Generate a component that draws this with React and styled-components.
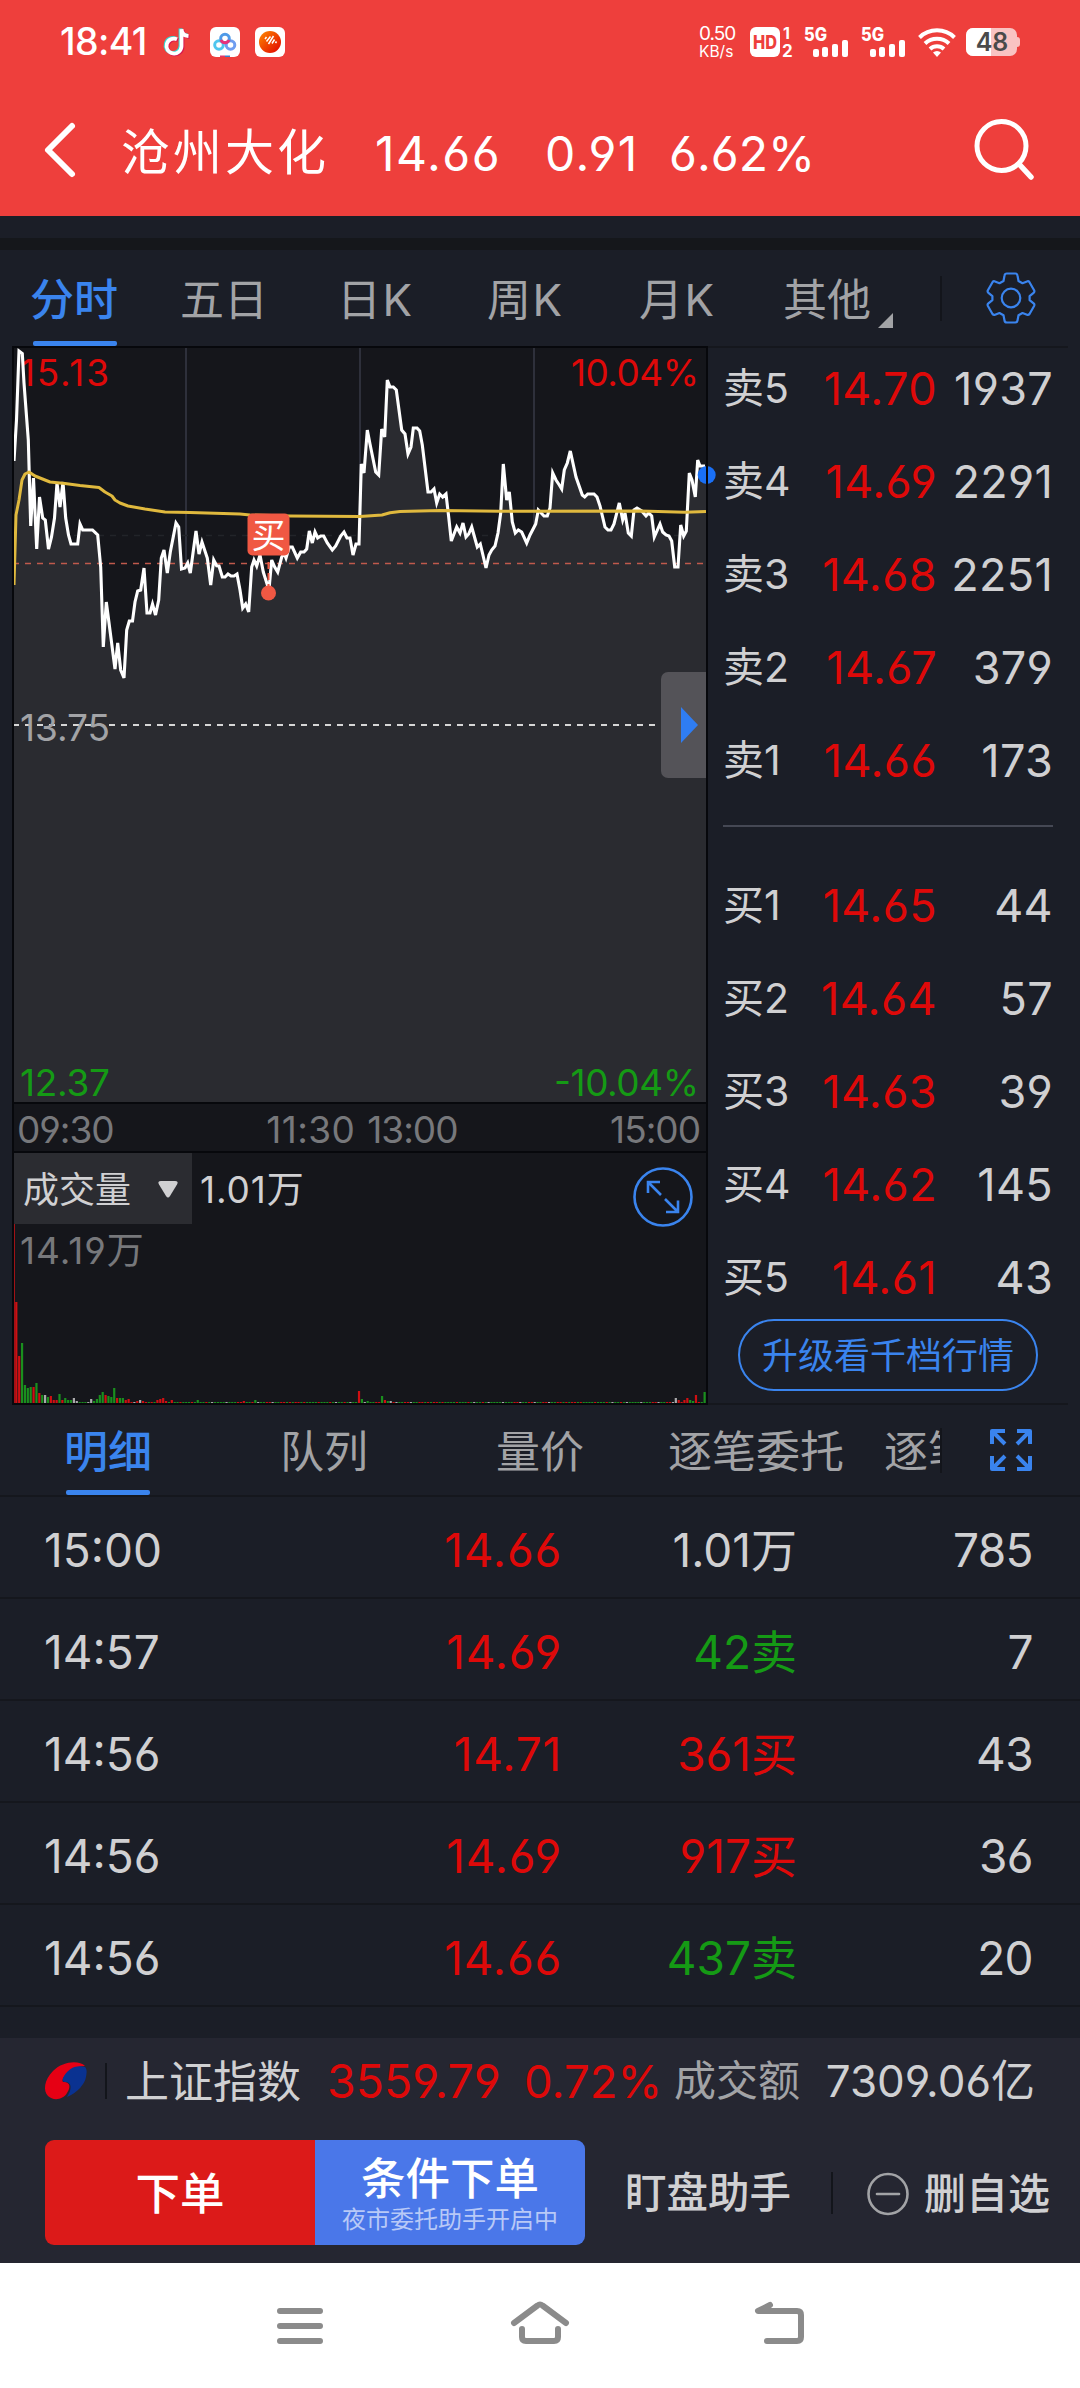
import React from "react";
import styled, { createGlobalStyle } from "styled-components";

const UP = "#de0909";
const DOWN = "#159a15";
const BLUE = "#3a84ee";
const LIGHT = "#d0d0d2";
const GREY = "#a2a3a6";

const priceLine = [
  [14, 461], [16.5, 420], [19, 351], [22.3, 353.5], [24, 383], [28.3, 440], [30.7, 526], [33.5, 478], [36.7, 549], [39.5, 497],
  [42.7, 518], [45.3, 520], [48.5, 549], [51.5, 537], [54.5, 518], [57, 483], [60, 507], [63, 482], [65.7, 518], [68.5, 535],
  [71, 544], [77.7, 544], [80, 524], [82.7, 530], [92.5, 530], [97.7, 535], [100.7, 567], [103.3, 647], [106.3, 602], [115, 669],
  [117.7, 643], [120.7, 670], [124, 678], [126.7, 630], [129.3, 621], [132.5, 621], [135, 602], [137.7, 591], [140.7, 590], [144, 568],
  [147, 613], [150, 613], [152.5, 604], [155.5, 615], [158.7, 600], [161.3, 558], [164, 550], [167.3, 573], [170.3, 552], [176, 523],
  [178.7, 527], [181.5, 569], [185, 568], [187.7, 563], [190.3, 573], [196, 531], [199, 554], [202, 542], [207.3, 558], [210.7, 585],
  [213.7, 560], [216.7, 565.7], [219, 566], [222.3, 577], [225, 577], [228, 574], [231, 576], [234, 576], [237, 574], [240, 590],
  [242.7, 608], [245.7, 604], [248.7, 612], [251.7, 567], [254, 560], [256.7, 566], [260, 555], [263.3, 572], [267.7, 586], [269.3, 586],
  [271.7, 560], [274.7, 567], [277.7, 572], [281.7, 557], [284, 553], [286, 558], [289.3, 547], [292.3, 547], [297.3, 558], [300.7, 552],
  [304, 552], [306.7, 549], [309.3, 531], [312.3, 543], [315, 532], [317.7, 538], [320.7, 536], [323.7, 536], [327.3, 543], [332.3, 550],
  [335.7, 546], [340.7, 536], [344, 532], [347, 538], [350, 538], [353, 555], [356, 544], [359, 544], [361.3, 464], [364, 473],
  [367.3, 430], [370, 444], [375.7, 472], [378.7, 475], [381.7, 429], [384.7, 437], [387.3, 380], [390, 387], [393.3, 387], [396.3, 390],
  [401.7, 430], [405, 434], [408, 454], [411, 447], [413.3, 428], [417, 428], [419.7, 431], [422.3, 445], [428, 492], [431, 492],
  [434, 489], [436.7, 503], [439.7, 494], [442.7, 497], [446, 494], [448.7, 517], [451.3, 541], [456.7, 527], [460, 533], [463, 523],
  [466, 537], [468.7, 534], [471.7, 527], [477.3, 547], [480.3, 544], [486, 568], [489, 555], [491.7, 550], [495, 546], [498, 533],
  [500.7, 513], [503.3, 464], [506.7, 500], [509.3, 492], [512.3, 522], [515.3, 533], [518.3, 530], [521.7, 532], [526.7, 543], [530, 535],
  [535.7, 524], [538.3, 510], [544, 516], [547.3, 516], [550, 508], [552.7, 473], [556, 480], [559.3, 485], [561.7, 489], [564.3, 470],
  [567.3, 463], [570.3, 451], [576, 477], [582.3, 495], [584.7, 497], [587.7, 494], [594, 494], [597, 497], [600, 506], [605, 527],
  [608, 530], [611, 530], [614, 524], [619.3, 503], [622.7, 520], [625, 513], [628.3, 533], [631.3, 536], [634, 510], [637, 508],
  [641.7, 511], [646, 516], [648.7, 513], [651.7, 516], [654.3, 537], [660, 524], [662.7, 532], [666, 535], [669, 536], [671.7, 541],
  [674.7, 567], [678, 567], [680.7, 525], [683.7, 536], [686.3, 531], [689.3, 473], [692, 480], [695.3, 497], [697.7, 460], [700, 466],
  [705, 466],
];

const averageLine = [
  [14, 585], [16, 515], [19, 500], [22, 480], [25, 474], [29, 472], [35, 476], [50, 482], [65, 483.5], [80, 485.5], [99, 487.5],
  [105, 492], [112, 496], [115, 500], [120, 503], [128, 506], [145, 509], [165, 512], [190, 512.5], [240, 514], [250, 515],
  [290, 516], [360, 516.5], [382, 515], [390, 512.8], [400, 511.5], [440, 510.5], [500, 511.3], [640, 511], [685, 512.3], [706, 511.5],
];

// index of the minute -> [height, colour]
const bigBars = {
  0: [101, "r"], 1: [47, "r"], 2: [60, "g"], 3: [18, "g"], 4: [15, "g"], 5: [16, "g"], 6: [16, "r"], 7: [20, "g"], 8: [10, "r"],
  9: [8, "g"], 10: [8, "w"], 11: [6, "g"], 12: [7, "r"], 13: [3, "r"], 14: [3, "r"], 15: [9, "g"], 16: [3, "r"], 17: [5, "g"],
  18: [3, "g"], 19: [3, "g"], 20: [5, "w"], 21: [2, "w"], 26: [4, "w"], 27: [2, "g"], 28: [4, "g"], 29: [8, "g"], 30: [11, "g"],
  31: [8, "r"], 32: [7, "g"], 33: [6, "g"], 34: [15, "g"], 35: [5, "r"], 36: [5, "g"], 37: [5, "g"], 38: [3, "r"], 39: [4, "r"],
  42: [2, "r"], 43: [3, "w"], 44: [2, "r"], 49: [3, "r"], 50: [4, "r"], 51: [5, "r"], 52: [2, "r"], 54: [3, "r"], 63: [3, "g"],
  79: [2, "r"], 83: [3, "g"], 119: [12, "r"], 120: [4, "g"], 122: [2, "g"], 127: [7, "g"], 128: [3, "r"], 129: [2, "g"], 130: [2, "w"],
  229: [5, "w"], 230: [3, "r"], 232: [3, "r"], 233: [5, "r"], 234: [3, "g"], 235: [2, "g"], 236: [8, "r"], 239: [11, "g"],
};
const barColors = { r: "#cf0f12", g: "#1a8f1e", w: "#a9a9ab" };
const smallPattern = "ggrgwggrrgrgggrrwg";

const asks = [
  ["卖5", "14.70", "1937"],
  ["卖4", "14.69", "2291"],
  ["卖3", "14.68", "2251"],
  ["卖2", "14.67", "379"],
  ["卖1", "14.66", "173"],
];
const bids = [
  ["买1", "14.65", "44"],
  ["买2", "14.64", "57"],
  ["买3", "14.63", "39"],
  ["买4", "14.62", "145"],
  ["买5", "14.61", "43"],
];
const trades = [
  ["15:00", "14.66", "1.01万", LIGHT, "785"],
  ["14:57", "14.69", "42卖", DOWN, "7"],
  ["14:56", "14.71", "361买", UP, "43"],
  ["14:56", "14.69", "917买", UP, "36"],
  ["14:56", "14.66", "437卖", DOWN, "20"],
];

const toPoints = (list) => list.map((p) => p.join(",")).join(" ");

const SignalBars = () => (
  <svg width="46" height="30" viewBox="0 0 46 30">
    <text x="0" y="14" fontSize="18.5" fontWeight="800" fill="#fff" textLength="23" lengthAdjust="spacingAndGlyphs">5G</text>
    <rect x="9" y="22" width="6" height="8" rx="2" fill="#fff" />
    <rect x="18" y="20" width="6" height="10" rx="2" fill="#fff" />
    <rect x="28" y="17" width="6" height="13" rx="2" fill="#fff" />
    <rect x="38" y="13" width="6" height="17" rx="2" fill="#fff" />
  </svg>
);

const PriceChart = () => (
  <ChartSvg width="698" height="758" viewBox="12 346 698 758">
    <rect x="13" y="347" width="694" height="756" fill="#15161b" />
    {[186, 360, 534].map((x) => (
      <line key={x} x1={x} x2={x} y1="348" y2="1102" stroke="#2e303b" strokeWidth="2" />
    ))}
    <line x1="14" x2="706" y1="535.5" y2="535.5" stroke="#222429" strokeWidth="1.5" strokeDasharray="6 6" />
    <polygon points={`14,1102 ${toPoints(priceLine)} 706,466 706,1102`} fill="#2a2b30" />
    <line x1="14" x2="706" y1="563.5" y2="563.5" stroke="#c05a4c" strokeWidth="1.6" strokeDasharray="6 6" strokeDashoffset="1" />
    <line x1="14" x2="706" y1="725" y2="725" stroke="#d6d6d6" strokeWidth="2" strokeDasharray="6 6" strokeDashoffset="1" />
    <text x="20" y="385.5" fontSize="37" fill={UP} textLength="89">15.13</text>
    <text x="571" y="385.5" fontSize="37" fill={UP} textLength="128">10.04%</text>
    <text x="20" y="740.5" fontSize="37" fill={GREY} textLength="90">13.75</text>
    <text x="20" y="1095.5" fontSize="37" fill={DOWN} textLength="90">12.37</text>
    <text x="554" y="1095.5" fontSize="37" fill={DOWN} textLength="145">-10.04%</text>
    <polyline points={toPoints(priceLine)} fill="none" stroke="#fff" strokeWidth="3.1" />
    <polyline points={toPoints(averageLine)} fill="none" stroke="#e0b93e" strokeWidth="3" strokeLinejoin="round" />
    <line x1="268.5" x2="268.5" y1="562" y2="590" stroke="#f05843" strokeWidth="2" strokeDasharray="7 4" />
    <circle cx="268.5" cy="593" r="7.5" fill="#f05843" />
    <rect x="247.5" y="513.5" width="42" height="42" rx="5" fill="#f05843" />
    <text x="268.5" y="547.5" fontSize="34" fill="#fff" textAnchor="middle">买</text>
    <path d="M706 672H668a7 7 0 0 0-7 7v92a7 7 0 0 0 7 7h38z" fill="#545358" />
    <path d="M681 707v36l17-18z" fill="#2f7df2" />
    <circle cx="706.7" cy="475" r="9" fill="#1a70f6" />
    <rect x="13" y="347" width="694" height="756" fill="none" stroke="#07080c" strokeWidth="2" />
  </ChartSvg>
);

const VolumeBars = () => (
  <svg width="692" height="118" viewBox="0 0 692 118">
    <rect width="1" height="118" fill="#a01216" />
    {Array.from({ length: 240 }, (_, i) => {
      const [h, c] = bigBars[i] || [1, smallPattern[(i * 7 + (i >> 3)) % smallPattern.length]];
      return <rect key={i} x={1.2 + i * 2.88} y={118 - h} width="2.2" height={h} fill={barColors[c]} />;
    })}
  </svg>
);

const App = () => {
  return (
    <Screen>
      <GlobalStyle />
      <Header>
        <StatusBar>
          <Clock>18:41</Clock>
          <NoteIcon width="26" height="30" viewBox="0 0 26 30">
            <g fill="none" strokeWidth="3.800">
              <path d="M10 11.500a7.500 7.500 0 1 0 4.500 7.100V1.500c.4 4 3 6.600 7 7" stroke="#35d6d0" />
              <path d="M12 13a7.500 7.500 0 1 0 4.500 7.100V3c.4 4 3 6.600 7 7" stroke="#d8184f" />
              <path d="M11 12.200a7.500 7.500 0 1 0 4.500 7.100V2.200c.4 4 3 6.600 7 7" stroke="#fff" />
            </g>
          </NoteIcon>
          <AppIcon width="30" height="30" viewBox="0 0 30 30">
            <rect width="30" height="30" rx="6" fill="#fff" />
            <g fill="none" strokeWidth="3">
              <circle cx="9" cy="18" r="4.300" stroke="#4fc6ee" />
              <circle cx="20.500" cy="18" r="4.300" stroke="#6f9df0" />
              <circle cx="15" cy="11.500" r="4.300" stroke="#4f9ae8" />
              <path d="M11 13a4.300 4.300 0 0 0 8 0" stroke="#e8327a" />
            </g>
            <path d="M10 28.500h5V30h-5z" fill="#e03a6a" />
            <path d="M15 28.500h5V30h-5z" fill="#3a80c8" />
          </AppIcon>
          <AppIcon width="30" height="30" viewBox="0 0 30 30">
            <defs>
              <linearGradient id="orange" x1="0" y1="0" x2="1" y2="1">
                <stop offset="0" stopColor="#ff8a00" />
                <stop offset="1" stopColor="#e00000" />
              </linearGradient>
            </defs>
            <rect width="30" height="30" rx="6" fill="#fff" />
            <circle cx="15" cy="15" r="11" fill="url(#orange)" />
            <path d="M10 12l1.500-2M11.500 14.500l4-5M13.500 17l5-8M17 16.500l2.500-4M20.500 16l1-1.500" stroke="#fff" strokeWidth="1.500" />
          </AppIcon>
          <StatusRight>
            <NetSpeed>
              <b>0.50</b>
              <span>KB/s</span>
            </NetSpeed>
            <svg width="44" height="30" viewBox="0 0 44 30">
              <rect width="30" height="30" rx="6" fill="#fff" />
              <text x="3" y="22" fontSize="19" fontWeight="800" fill="#ee3f3c" textLength="24" lengthAdjust="spacingAndGlyphs">HD</text>
              <text x="33" y="12" fontSize="16" fontWeight="700" fill="#fff">1</text>
              <text x="32" y="29.500" fontSize="17" fontWeight="700" fill="#fff">2</text>
            </svg>
            <SignalWrap><SignalBars /></SignalWrap>
            <SignalWrap><SignalBars /></SignalWrap>
            <WifiIcon width="38" height="31" viewBox="0 0 38 31">
              <g fill="none" stroke="#fff" strokeWidth="4">
                <path d="M1.500 10.500a25 25 0 0 1 35 0" />
                <path d="M7 16.500a17.500 17.500 0 0 1 24 0" />
                <path d="M12 22a10.500 10.500 0 0 1 14 0" />
              </g>
              <path d="M19 30l-4-4.500a6 6 0 0 1 8 0z" fill="#fff" />
            </WifiIcon>
            <svg width="55" height="28" viewBox="0 0 55 28">
              <rect width="51" height="28" rx="7" fill="#f9c3c2" />
              <path d="M7 0h18v28H7a7 7 0 0 1-7-7V7a7 7 0 0 1 7-7z" fill="#fff" />
              <path d="M51 9a3 3 0 0 1 3 3v4a3 3 0 0 1-3 3z" fill="#f9c3c2" />
              <text x="26" y="23" fontSize="25" fontWeight="600" fill="#4a4a4a" textAnchor="middle">48</text>
            </svg>
          </StatusRight>
        </StatusBar>
        <TitleBar>
          <BackIcon width="36" height="60" viewBox="0 0 36 60">
            <path d="M30 6L6 30l24 24" fill="none" stroke="#fff" strokeWidth="6" strokeLinecap="round" strokeLinejoin="round" />
          </BackIcon>
          <StockName>沧州大化</StockName>
          <TitleNumber $width={170} $spacing={1.5}>14.66</TitleNumber>
          <TitleNumber $width={124} $spacing={1.5}>0.91</TitleNumber>
          <TitleNumber $width={160}>6.62%</TitleNumber>
          <SearchIcon width="64" height="64" viewBox="0 0 64 64">
            <circle cx="28.500" cy="28" r="24.500" fill="none" stroke="#fff" strokeWidth="5" />
            <path d="M46 46l12 13" stroke="#fff" strokeWidth="5.500" strokeLinecap="round" />
          </SearchIcon>
        </TitleBar>
      </Header>
      <Strip />

      <PeriodTabs>
        <Period $active $width={150}>分时</Period>
        <Period $width={157}>五日</Period>
        <Period $width={150} $spacing={1.5}>日K</Period>
        <Period $width={152} $spacing={1.5}>周K</Period>
        <Period $width={144} $spacing={1.5}>月K</Period>
        <Period $width={157}>
          其他
          <Corner />
        </Period>
        <Divider $height={45} />
        <GearIcon width="50" height="52" viewBox="0 0 50 52">
          <g fill="none" stroke={BLUE} strokeWidth="2.200" strokeLinejoin="round">
            <path d="M18.500 3.500q.3-2 2.300-2h8.400q2 0 2.300 2l1 5.500 4 2.200 4.500-1.800q1.500-.6 2.500.8l4.600 8q.8 1.500-.5 2.600l-4 3.300v4l4 3.300q1.300 1.100.5 2.600l-4.600 8q-1 1.400-2.500.8l-4.500-1.800-4 2.200-1 5.300q-.3 2-2.300 2h-8.400q-2 0-2.300-2l-1-5.300-4-2.200-4.500 1.800q-1.500.6-2.500-.8l-4.600-8q-.8-1.500.5-2.600l4-3.300v-4l-4-3.300q-1.300-1.100-.5-2.600l4.600-8q1-1.400 2.500-.8l4.500 1.800 4-2.200z" />
            <circle cx="25" cy="26" r="9.300" />
          </g>
        </GearIcon>
      </PeriodTabs>

      <Quote>
        <ChartColumn>
          <PriceChart />
          <TimeAxis>
            <span>09:30</span>
            <MidTimes>
              <Noon>11:30</Noon>
              <span>13:00</span>
            </MidTimes>
            <span>15:00</span>
          </TimeAxis>
          <VolumePanel>
            <VolumeHead>
              <VolumeSelect>
                成交量
                <svg width="20" height="17" viewBox="0 0 20 17">
                  <path d="M3 0h14q4 0 2 3.500l-7 11.500q-2 3-4 0L1 3.500Q-1 0 3 0z" fill={LIGHT} />
                </svg>
              </VolumeSelect>
              <VolumeValue>1.01万</VolumeValue>
              <ZoomIcon width="60" height="60" viewBox="0 0 60 60">
                <g fill="none" stroke={BLUE} strokeWidth="2.600">
                  <circle cx="30" cy="30" r="28.500" />
                  <path d="M28 28L15.500 15.500M15 26V15h12M32 32l12.500 12.500M33 45h12V33.500" />
                </g>
              </ZoomIcon>
            </VolumeHead>
            <VolumeMax>14.19万</VolumeMax>
            <VolumeBars />
          </VolumePanel>
        </ChartColumn>

        <Book>
          {asks.map(([label, price, count]) => (
            <BookRow key={label}>
              <span>{label}</span>
              <BookPrice>{price}</BookPrice>
              <BookCount>{count}</BookCount>
            </BookRow>
          ))}
          <BookLine />
          {bids.map(([label, price, count]) => (
            <BookRow key={label}>
              <span>{label}</span>
              <BookPrice>{price}</BookPrice>
              <BookCount>{count}</BookCount>
            </BookRow>
          ))}
          <Upgrade>升级看千档行情</Upgrade>
        </Book>
      </Quote>

      <DetailTabs>
        <DetailScroll>
          <Detail $active>明细</Detail>
          <Detail>队列</Detail>
          <Detail>量价</Detail>
          <Detail>逐笔委托</Detail>
          <Detail>逐笔成交</Detail>
        </DetailScroll>
        <Divider $height={45} />
        <ExpandIcon width="42" height="42" viewBox="0 0 42 42">
          <g fill="none" stroke={BLUE} strokeWidth="4" strokeLinejoin="round">
            <path d="M15 2H2v13M2 2l13 13M27 2h13v13M40 2L27 15M15 40H2V27M2 40l13-13M27 40h13V27M40 40L27 27" />
          </g>
        </ExpandIcon>
      </DetailTabs>

      {trades.map(([time, price, volume, color, count], i) => (
        <TradeRow key={i}>
          <TradeCell>{time}</TradeCell>
          <TradeCell $color={UP} $right $spacing={0.8}>{price}</TradeCell>
          <TradeCell $color={color} $right>{volume}</TradeCell>
          <TradeCell $right $spacing={-0.6}>{count}</TradeCell>
        </TradeRow>
      ))}

      <Footer>
        <IndexRow>
          <svg width="42" height="38" viewBox="0 0 42 38">
            <path d="M40 4C34-2 18-1 8 9-1 18-2 29 3 34c5 5 15 4 19-3 4-6 3-11-3-11-2 0-2-2 0-5C24 8 32 4 40 4z" fill="#e60014" />
            <path d="M40 5c-9-3-18 2-22 11-1 3 0 4 3 4 6 1 6 7 1 15 10-4 18-13 19-20 1-5 1-8-1-10z" fill="#0a3291" />
          </svg>
          <Divider $height={36} />
          <IndexName>上证指数</IndexName>
          <IndexNumber>3559.79</IndexNumber>
          <IndexChange>0.72%</IndexChange>
          <Turnover>成交额</Turnover>
          <TurnoverValue>7309.06亿</TurnoverValue>
        </IndexRow>
        <ActionRow>
          <OrderButton $color="#dc1a19" $left>下单</OrderButton>
          <OrderButton $color="#4a77e9">
            条件下单
            <small>夜市委托助手开启中</small>
          </OrderButton>
          <Watch>盯盘助手</Watch>
          <Divider $height={42} />
          <Remove>
            <svg width="42" height="44" viewBox="0 0 42 44">
              <ellipse cx="21" cy="22" rx="19.500" ry="20" fill="none" stroke={GREY} strokeWidth="2.600" />
              <path d="M10 22h22" stroke={GREY} strokeWidth="2.600" strokeLinecap="round" />
            </svg>
            删自选
          </Remove>
        </ActionRow>
      </Footer>

      <NavBar>
        <svg width="60" height="50" viewBox="0 0 60 50">
          <path d="M10 10h40M10 25h40M10 40h40" />
        </svg>
        <svg width="60" height="50" viewBox="0 0 60 50">
          <path d="M4 22L27.500 4.500q2.500-2 5 0L56 22M12 28v8q0 4 4 4h28q4 0 4-4v-8" />
        </svg>
        <svg width="60" height="50" viewBox="0 0 60 50">
          <path d="M20 4L8 10h39q4 0 4 4v22q0 4-4 4H17" />
        </svg>
      </NavBar>
    </Screen>
  );
};

export default App;

const GlobalStyle = createGlobalStyle`
  body {
    margin: 0;
    background: #1b1e27;
  }

  * {
    box-sizing: border-box;
  }

  svg {
    display: block;
    flex: none;
    overflow: visible;
  }
`;

const Screen = styled.div`
  width: 1080px;
  height: 2388px;
  overflow: hidden;
  display: flex;
  flex-direction: column;
  background: #1b1e27;
  color: ${LIGHT};
  font-family: Inter, "Noto Sans CJK SC", sans-serif;
  font-feature-settings: "cv03", "cv04";
  line-height: 1;
  white-space: nowrap;
`;

const Header = styled.header`
  height: 216px;
  flex: none;
  background: #ee3f3c;
  color: #fff;
`;

const StatusBar = styled.div`
  height: 84px;
  display: flex;
  align-items: center;
  padding-left: 60px;
`;

const Clock = styled.span`
  width: 106px;
  font-size: 37.5px;
  font-weight: 500;
  letter-spacing: -0.6px;
`;

const NoteIcon = styled.svg`
  margin-right: 3px;
`;

const AppIcon = styled.svg`
  margin-left: 15px;
`;

const StatusRight = styled.div`
  display: flex;
  align-items: center;
  margin-left: auto;
  padding-right: 59px;
`;

const NetSpeed = styled.div`
  width: 51px;
  display: flex;
  flex-direction: column;
  gap: 1px;

  b {
    font-size: 19px;
    font-weight: 400;
    letter-spacing: -1px;
  }

  span {
    font-size: 15.5px;
  }
`;

const SignalWrap = styled.div`
  width: 57px;
  padding-left: 10px;
`;

const WifiIcon = styled.svg`
  margin: 0 10px 0 10px;
`;

const TitleBar = styled.div`
  height: 132px;
  display: flex;
  align-items: center;
  padding: 0 43px 0 42px;
`;

const BackIcon = styled.svg`
  margin: 0 43px 0 0;
`;

const StockName = styled.h1`
  width: 254px;
  margin: 0;
  padding-top: 4px;
  font-size: 49px;
  font-weight: 400;
  letter-spacing: 3px;
`;

const TitleNumber = styled.span`
  width: ${(p) => p.$width}px;
  padding-top: 7px;
  font-size: 48px;
  letter-spacing: ${(p) => p.$spacing || 0}px;
`;

const SearchIcon = styled.svg`
  margin-left: auto;
`;

const Strip = styled.div`
  height: 34px;
  flex: none;
  border-bottom: 12px solid #15171b;
`;

const Divider = styled.i`
  width: 2px;
  height: ${(p) => p.$height}px;
  flex: none;
  background: #13151b;
`;

const PeriodTabs = styled.nav`
  height: 96px;
  flex: none;
  display: flex;
  align-items: center;
  padding-left: 30px;
`;

const Period = styled.div`
  position: relative;
  width: ${(p) => p.$width}px;
  height: 96px;
  font-size: 44px;
  line-height: 101px;
  letter-spacing: ${(p) => p.$spacing || 0}px;
  font-weight: ${(p) => (p.$active ? 500 : 400)};
  color: ${(p) => (p.$active ? BLUE : GREY)};

  &::after {
    content: "";
    display: ${(p) => (p.$active ? "block" : "none")};
    position: absolute;
    left: 3px;
    bottom: 0;
    width: 84px;
    height: 5px;
    border-radius: 2px;
    background: ${BLUE};
  }
`;

const Corner = styled.i`
  position: absolute;
  left: 95px;
  bottom: 18px;
  width: 15px;
  height: 15px;
  background: ${GREY};
  clip-path: polygon(100% 0, 100% 100%, 0 100%);
`;

const GearIcon = styled.svg`
  margin-left: 44px;
`;

const Quote = styled.section`
  height: 1059px;
  flex: none;
  display: flex;
`;

const ChartColumn = styled.div`
  width: 696px;
  margin-left: 12px;
`;

const ChartSvg = styled.svg`
  position: relative;
  z-index: 1;
`;

const TimeAxis = styled.div`
  width: 696px;
  height: 47px;
  display: flex;
  justify-content: space-between;
  align-items: center;
  padding: 4px 6px 0 3px;
  border: solid #07080c;
  border-width: 0 2px;
  background: #15161b;
  color: #77787b;
  font-size: 37px;
  letter-spacing: -1px;
`;

const MidTimes = styled.div`
  display: flex;
  gap: 12px;
`;

const Noon = styled.span`
  letter-spacing: 0.4px;
`;

const VolumePanel = styled.div`
  width: 696px;
  height: 254px;
  display: flex;
  flex-direction: column;
  border: 2px solid #07080c;
  background: #15161b;
`;

const VolumeHead = styled.div`
  height: 71px;
  display: flex;
  align-items: center;
`;

const VolumeSelect = styled.div`
  width: 178px;
  height: 71px;
  display: flex;
  align-items: center;
  justify-content: space-between;
  padding: 2px 14px 0 9px;
  background: #2b2c31;
  font-size: 36px;
`;

const VolumeValue = styled.span`
  margin-left: 8px;
  padding-top: 2px;
  font-size: 37px;
  letter-spacing: 0.9px;
`;

const ZoomIcon = styled.svg`
  margin: 16px 13px 0 auto;
`;

const VolumeMax = styled.div`
  height: 61px;
  padding: 8px 0 0 5px;
  border-left: 1px solid #a01216;
  color: #77787b;
  font-size: 37px;
  letter-spacing: 1px;
`;

const Book = styled.div`
  flex: 1;
  margin-right: 12px;
  padding: 0 15px;
  border-top: 2px solid #15171d;
  border-bottom: 2px solid #15171d;
  display: flex;
  flex-direction: column;
`;

const BookRow = styled.div`
  height: 93px;
  display: grid;
  grid-template-columns: 91px 123px 1fr;
  align-items: center;
  font-size: 41px;
  position: relative;
  top: -6px;
`;

const BookPrice = styled.span`
  color: ${UP};
  font-size: 45px;
  letter-spacing: 0.4px;
  text-align: right;
`;

const BookCount = styled.span`
  font-size: 45px;
  letter-spacing: 0.3px;
  text-align: right;
`;

const BookLine = styled.div`
  height: 2px;
  margin: 12px 0 38px;
  background: #454854;
`;

const Upgrade = styled.button`
  width: 300px;
  height: 72px;
  margin: -11px auto 0;
  padding: 2px 0 0;
  border: 2px solid ${BLUE};
  border-radius: 36px;
  background: none;
  color: ${BLUE};
  font: inherit;
  font-size: 36px;
`;

const DetailTabs = styled.nav`
  height: 92px;
  flex: none;
  display: flex;
  align-items: center;
  border-bottom: 2px solid #15171d;
`;

const DetailScroll = styled.div`
  width: 940px;
  display: flex;
  overflow: hidden;
`;

const Detail = styled.div`
  width: 216px;
  height: 90px;
  flex: none;
  position: relative;
  font-size: 44px;
  line-height: 95px;
  text-align: center;
  font-weight: ${(p) => (p.$active ? 500 : 400)};
  color: ${(p) => (p.$active ? BLUE : GREY)};

  &::after {
    content: "";
    display: ${(p) => (p.$active ? "block" : "none")};
    position: absolute;
    left: 66px;
    bottom: 0;
    width: 84px;
    height: 5px;
    border-radius: 2px;
    background: ${BLUE};
  }
`;

const ExpandIcon = styled.svg`
  margin-left: 48px;
`;

const TradeRow = styled.div`
  height: 102px;
  flex: none;
  display: grid;
  grid-template-columns: 240px 278px 235px 236px;
  align-items: center;
  padding: 5px 0 0 44px;
  border-bottom: 2px solid #15171d;
`;

const TradeCell = styled.span`
  color: ${(p) => p.$color || LIGHT};
  font-size: 46px;
  letter-spacing: ${(p) => p.$spacing || 0}px;
  text-align: ${(p) => (p.$right ? "right" : "left")};
`;

const Footer = styled.footer`
  height: 225px;
  flex: none;
  margin-top: 31px;
  background: #252631;
`;

const IndexRow = styled.div`
  height: 86px;
  display: flex;
  align-items: center;
  padding: 0 45px;

  i {
    margin: 0 18px 0 18px;
  }
`;

const IndexName = styled.span`
  width: 202px;
  padding-top: 1px;
  font-size: 44px;
`;

const IndexNumber = styled.span`
  width: 197px;
  padding-top: 1px;
  color: ${UP};
  font-size: 46.5px;
`;

const IndexChange = styled.span`
  width: 150px;
  padding-top: 1px;
  color: ${UP};
  font-size: 45.5px;
`;

const Turnover = styled.span`
  color: ${GREY};
  font-size: 42px;
`;

const TurnoverValue = styled.span`
  margin-left: auto;
  font-size: 44px;
`;

const ActionRow = styled.div`
  height: 105px;
  margin-top: 16px;
  padding: 0 30px 0 45px;
  display: flex;
  align-items: center;
`;

const OrderButton = styled.button`
  width: 270px;
  height: 105px;
  padding: 4px 0 0;
  border: none;
  border-radius: ${(p) => (p.$left ? "9px 0 0 9px" : "0 9px 9px 0")};
  background: ${(p) => p.$color};
  color: #fff;
  display: flex;
  flex-direction: column;
  align-items: center;
  justify-content: center;
  font: inherit;
  font-size: 44.5px;
  font-weight: 500;

  small {
    margin-top: 6px;
    font-size: 24px;
    font-weight: 400;
    color: #b8c9f7;
  }
`;

const Watch = styled.span`
  margin: 0 40px 0 40px;
  padding-top: 3px;
  font-size: 41.5px;
  font-weight: 500;
`;

const Remove = styled.div`
  display: flex;
  align-items: center;
  gap: 15px;
  margin-left: auto;
  padding-top: 3px;
  font-size: 42px;
  font-weight: 500;
`;

const NavBar = styled.nav`
  height: 126px;
  flex: none;
  display: flex;
  justify-content: center;
  gap: 180px;
  padding-top: 38px;
  background: #fff;

  svg {
    fill: none;
    stroke: #8b8b8b;
    stroke-width: 6;
    stroke-linecap: round;
    stroke-linejoin: round;
  }
`;
